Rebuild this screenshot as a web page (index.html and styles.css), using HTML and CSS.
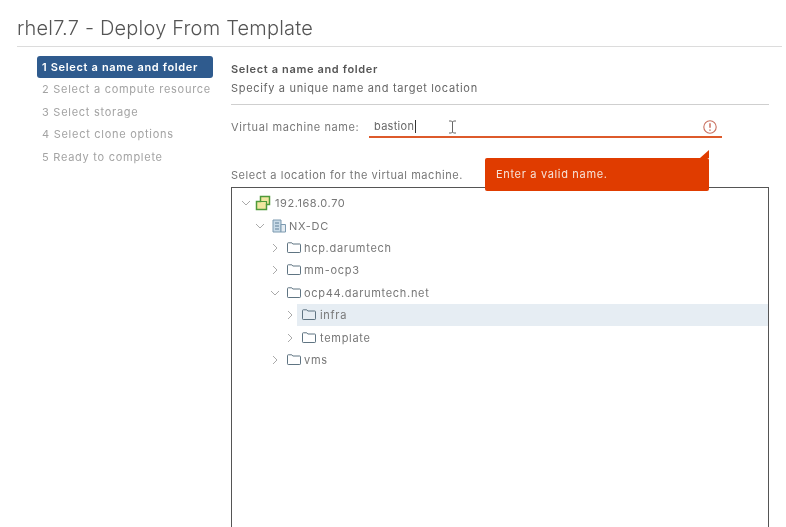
FILE: index.html
```html
<!DOCTYPE html>
<html lang="en">

<head>
     <meta charset="UTF-8">
     <title>rhel7.7 - Deploy From Template</title>
     <link rel="stylesheet" href="styles.css">
</head>

<body>
     <div class="dialog">
          <h1 class="title">rhel7.7 - Deploy From Template</h1>
          <div class="wizard">
               <ul class="steps">
                    <li class="active">1 Select a name and folder</li>
                    <li>2 Select a compute resource</li>
                    <li>3 Select storage</li>
                    <li>4 Select clone options</li>
                    <li>5 Ready to complete</li>
               </ul>
               <div class="content">
                    <div class="head">
                         <h2>Select a name and folder</h2>
                         <p>Specify a unique name and target location</p>
                    </div>
                    <div class="name-row">
                         <label>Virtual machine name:</label>
                         <div class="name-input">
                              <span class="value">bastion</span>
                              <svg class="cursor" width="9" height="14" viewBox="0 0 9 14">
                                   <path d="M1 1h2.5l1 1 1-1H8M4.5 2v10M1 13h2.5l1-1 1 1H8" fill="none" stroke="#666" stroke-width="1" />
                              </svg>
                              <svg class="alert" width="16" height="16" viewBox="0 0 16 16">
                                   <circle cx="8" cy="8" r="6.2" fill="none" stroke="#c9705f" stroke-width="1.1" />
                                   <path d="M8 4.2v4.6M8 10.4v1.4" fill="none" stroke="#c25a48" stroke-width="1.3" />
                              </svg>
                         </div>
                         <div class="tooltip">Enter a valid name.</div>
                    </div>
                    <p class="location">Select a location for the virtual machine.</p>
                    <div class="tree">
                         <div class="node root">
                              <svg class="caret" viewBox="0 0 10 10"><path d="M1 3l4 4 4-4" /></svg>
                              <svg class="icon" width="16" height="16" viewBox="0 0 16 16">
                                   <path d="M5.5 1.5h9v8h-3v5h-10v-8h4z" fill="#f1e6a0" stroke="#4f9a3a" stroke-width="1.5" />
                                   <path d="M5.5 6.5h6v3" fill="none" stroke="#4f9a3a" stroke-width="1.2" />
                              </svg>
                              <span>192.168.0.70</span>
                         </div>
                         <div class="node lvl1">
                              <svg class="caret" viewBox="0 0 10 10"><path d="M1 3l4 4 4-4" /></svg>
                              <svg class="icon" width="16" height="16" viewBox="0 0 16 16">
                                   <path d="M2 2h8v12H2z" fill="#c9dbe8" stroke="#7d9ab0" />
                                   <path d="M10 6.5h4.5V14H10z" fill="#e4ecf2" stroke="#7d9ab0" />
                                   <path d="M4 5h4M4 8h4M4 11h4" stroke="#5f7f98" />
                              </svg>
                              <span>NX-DC</span>
                         </div>
                         <div class="node lvl2">
                              <svg class="caret" viewBox="0 0 10 10"><path d="M3 1l4 4-4 4" /></svg>
                              <svg class="icon folder" width="16" height="14" viewBox="0 0 16 14"><path d="M1.5 2.5q0-.7.7-.7h3.6l1 1.2h7q.7 0 .7.7v7.1q0 .7-.7.7H2.2q-.7 0-.7-.7z" /></svg>
                              <span>hcp.darumtech</span>
                         </div>
                         <div class="node lvl2">
                              <svg class="caret" viewBox="0 0 10 10"><path d="M3 1l4 4-4 4" /></svg>
                              <svg class="icon folder" width="16" height="14" viewBox="0 0 16 14"><path d="M1.5 2.5q0-.7.7-.7h3.6l1 1.2h7q.7 0 .7.7v7.1q0 .7-.7.7H2.2q-.7 0-.7-.7z" /></svg>
                              <span>mm-ocp3</span>
                         </div>
                         <div class="node lvl2">
                              <svg class="caret" viewBox="0 0 10 10"><path d="M1 3l4 4 4-4" /></svg>
                              <svg class="icon folder" width="16" height="14" viewBox="0 0 16 14"><path d="M1.5 2.5q0-.7.7-.7h3.6l1 1.2h7q.7 0 .7.7v7.1q0 .7-.7.7H2.2q-.7 0-.7-.7z" /></svg>
                              <span>ocp44.darumtech.net</span>
                         </div>
                         <div class="node lvl3">
                              <svg class="caret" viewBox="0 0 10 10"><path d="M3 1l4 4-4 4" /></svg>
                              <div class="selected">
                                   <svg class="icon folder" width="16" height="14" viewBox="0 0 16 14"><path d="M1.5 2.5q0-.7.7-.7h3.6l1 1.2h7q.7 0 .7.7v7.1q0 .7-.7.7H2.2q-.7 0-.7-.7z" /></svg>
                                   <span>infra</span>
                              </div>
                         </div>
                         <div class="node lvl3">
                              <svg class="caret" viewBox="0 0 10 10"><path d="M3 1l4 4-4 4" /></svg>
                              <svg class="icon folder" width="16" height="14" viewBox="0 0 16 14"><path d="M1.5 2.5q0-.7.7-.7h3.6l1 1.2h7q.7 0 .7.7v7.1q0 .7-.7.7H2.2q-.7 0-.7-.7z" /></svg>
                              <span>template</span>
                         </div>
                         <div class="node lvl2">
                              <svg class="caret" viewBox="0 0 10 10"><path d="M3 1l4 4-4 4" /></svg>
                              <svg class="icon folder" width="16" height="14" viewBox="0 0 16 14"><path d="M1.5 2.5q0-.7.7-.7h3.6l1 1.2h7q.7 0 .7.7v7.1q0 .7-.7.7H2.2q-.7 0-.7-.7z" /></svg>
                              <span>vms</span>
                         </div>
                    </div>
               </div>
          </div>
     </div>
</body>

</html>
```

FILE: styles.css
```css
html,
body {
     margin: 0;
     height: 527px;
     overflow: hidden;
     background: #fff;
}

body {
     font-family: Inter, "Open Sans", "Liberation Sans", sans-serif;
     color: #666;
     filter: blur(0.35px);
}

.dialog {
     padding: 15px 4px 0 17px;
}

.title {
     margin: 0;
     height: 31px;
     line-height: 27px;
     font-size: 20px;
     font-weight: 300;
     letter-spacing: 0.2px;
     color: #555;
     border-bottom: 1px solid #dcdcdc;
}

.wizard {
     display: flex;
     padding: 9px 0 0 20px;
}

/* steps */
.steps {
     list-style: none;
     margin: 0;
     padding: 0;
     width: 176px;
     flex: none;
}

.steps li {
     height: 22.4px;
     line-height: 22px;
     padding-left: 5px;
     font-size: 11px;
     letter-spacing: 0.73px;
     color: #a3a3a3;
     white-space: nowrap;
}

.steps li.active {
     background: #2f5b8e;
     border-radius: 3px;
     color: #fff;
     font-weight: 600;
     letter-spacing: 0.66px;
}

/* content */
.content {
     margin-left: 18px;
     width: 538px;
}

.head {
     padding-top: 5px;
     height: 43px;
     border-bottom: 1px solid #cfcfcf;
}

.head h2 {
     margin: 0;
     font-size: 11px;
     line-height: 17px;
     font-weight: 600;
     letter-spacing: 0.65px;
     color: #555;
}

.head p {
     margin: 2px 0 0;
     font-size: 11px;
     line-height: 17px;
     letter-spacing: 0.67px;
     color: #666;
}

.name-row {
     position: relative;
     display: flex;
     align-items: flex-start;
     padding-top: 12px;
     height: 34px;
}

.name-row label {
     width: 138px;
     flex: none;
     line-height: 20px;
     font-size: 11px;
     letter-spacing: 0.6px;
     color: #777;
}

.name-input {
     display: flex;
     align-items: center;
     width: 353px;
     height: 19px;
     border-bottom: 2px solid #dd5a2b;
}

.value {
     margin-left: 5px;
     padding-right: 1px;
     font-size: 11px;
     letter-spacing: 0.3px;
     color: #666;
     border-right: 1px solid #333;
     line-height: 13px;
}

.cursor {
     margin-left: 32px;
}

.alert {
     margin-left: auto;
     margin-right: 4px;
}

.tooltip {
     position: absolute;
     left: 254px;
     top: 53px;
     width: 224px;
     height: 33px;
     box-sizing: border-box;
     padding-left: 11px;
     line-height: 32px;
     font-size: 11px;
     letter-spacing: 0.67px;
     color: #f6e3d8;
     background: #e03c00;
     border-radius: 2px;
}

.tooltip::after {
     content: "";
     position: absolute;
     right: 0;
     top: -8px;
     border-left: 9px solid transparent;
     border-bottom: 8px solid #e03c00;
}

.location {
     margin: 16px 0 0;
     line-height: 17px;
     font-size: 11px;
     letter-spacing: 0.55px;
     color: #777;
}

/* tree */
.tree {
     margin-top: 3px;
     height: 335px;
     padding-top: 4px;
     border: 1px solid #555;
     border-bottom: 0;
}

.node {
     display: flex;
     align-items: center;
     height: 22.4px;
     padding-left: 9px;
     font-size: 11px;
     letter-spacing: 0.7px;
     color: #777;
}

.node.root .caret {
     margin-right: 4px;
}

.node.root .icon {
     margin-right: 4px;
}

.node.root span {
     letter-spacing: 0.55px;
}

.node.lvl1 {
     padding-left: 23px;
}

.node.lvl2 {
     padding-left: 38px;
}

.node.lvl3 {
     padding-left: 53px;
}

.node.lvl3 .icon {
     margin-right: 3px;
}

.caret {
     width: 10px;
     height: 10px;
     flex: none;
     margin-right: 6px;
     fill: none;
     stroke: #aaa;
     stroke-width: 1;
}

.icon {
     flex: none;
     margin-right: 2px;
}

.folder {
     fill: none;
     stroke: #5f7482;
     stroke-width: 1;
}

.selected {
     display: flex;
     align-items: center;
     flex: 1;
     height: 100%;
     margin-left: -4px;
     padding-left: 4px;
     background: #e6edf3;
}
```
